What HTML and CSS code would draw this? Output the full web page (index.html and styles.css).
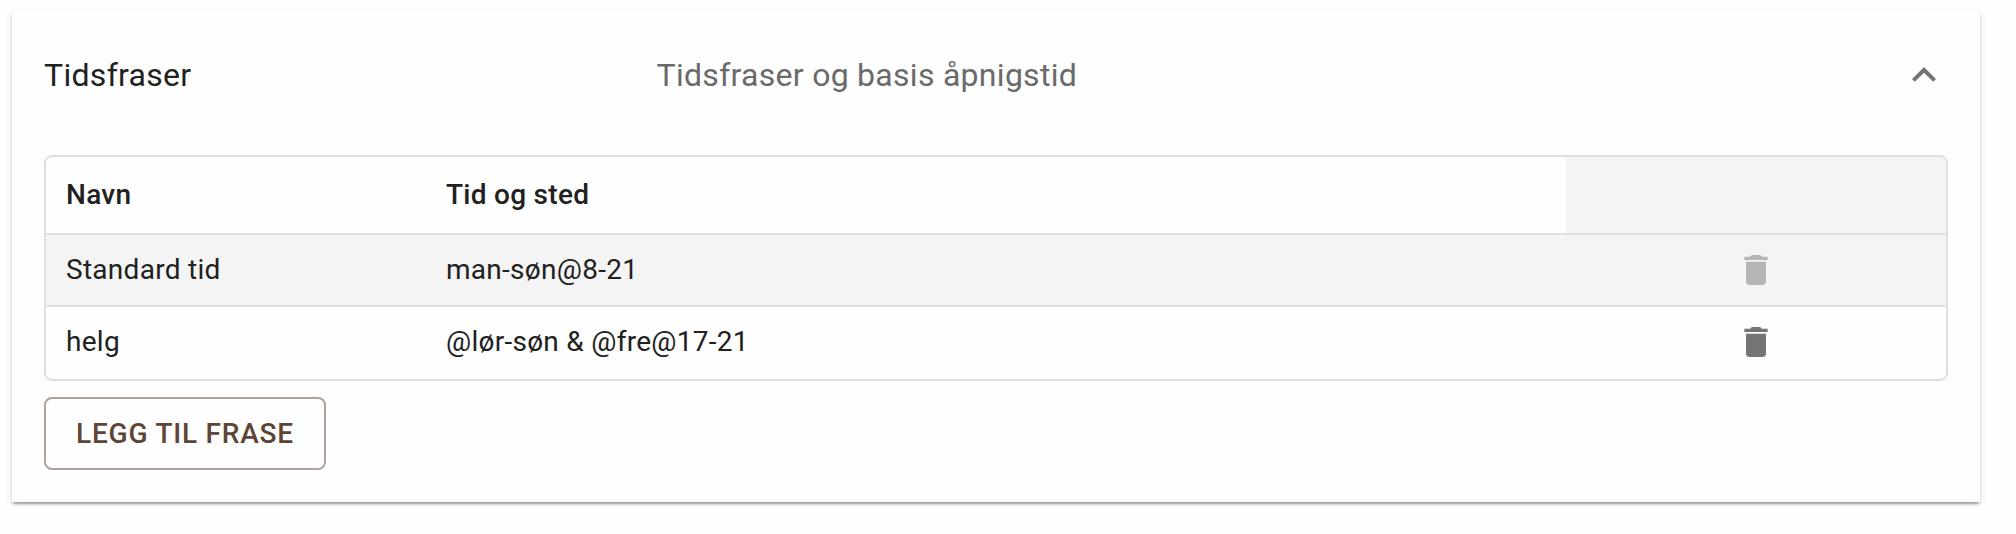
FILE: index.html
```html
<!DOCTYPE html>
<html lang="no">
<head>
<meta charset="utf-8">
<title>Tidsfraser</title>
<link rel="stylesheet" href="styles.css">
</head>
<body>
<section class="panel">
  <header class="panel-header">
    <h2 class="panel-title">Tidsfraser</h2>
    <p class="panel-description">Tidsfraser og basis åpnigstid</p>
    <svg class="chevron" viewBox="0 0 24 24"><path d="M12 8l-6 6 1.41 1.41L12 10.83l4.59 4.58L18 14z"/></svg>
  </header>
  <div class="phrases">
    <div class="row row-head">
      <div class="cell">Navn</div>
      <div class="cell">Tid og sted</div>
      <div class="cell cell-action"></div>
    </div>
    <div class="row row-default">
      <div class="cell">Standard tid</div>
      <div class="cell">man-søn@8-21</div>
      <div class="cell cell-action"><svg class="trash trash-disabled" viewBox="0 0 24 24"><path d="M6 19c0 1.1.9 2 2 2h8c1.1 0 2-.9 2-2V7H6v12zM19 4h-3.5l-1-1h-5l-1 1H5v2h14V4z"/></svg></div>
    </div>
    <div class="row">
      <div class="cell">helg</div>
      <div class="cell">@lør-søn &amp; @fre@17-21</div>
      <div class="cell cell-action"><svg class="trash" viewBox="0 0 24 24"><path d="M6 19c0 1.1.9 2 2 2h8c1.1 0 2-.9 2-2V7H6v12zM19 4h-3.5l-1-1h-5l-1 1H5v2h14V4z"/></svg></div>
    </div>
  </div>
  <button class="add-button" type="button">LEGG TIL FRASE</button>
</section>
</body>
</html>
```
FILE: styles.css
```css
* {
  box-sizing: border-box;
}

body {
  margin: 0;
  padding: 11px 36px 32px 12px;
  background: #fefefe;
  color: #212121;
  font-family: Roboto, "Liberation Sans", sans-serif;
}

.panel {
  height: 491px;
  padding: 0 32px;
  background: #fefefe;
  box-shadow: 0 4px 2px -2px rgba(0, 0, 0, 0.2), 0 2px 2px 0 rgba(0, 0, 0, 0.14), 0 2px 6px 0 rgba(0, 0, 0, 0.12);
}

.panel-header {
  display: flex;
  align-items: center;
  height: 128px;
  margin-bottom: 16px;
}

.panel-title,
.panel-description {
  margin: 0;
  font-size: 32px;
  font-weight: 400;
  line-height: 48px;
  letter-spacing: 0.3px;
}

.panel-title {
  flex: 0 0 612.6px;
}

.panel-description {
  flex: 1;
  color: #6a6a6a;
  letter-spacing: 0.28px;
}

.chevron {
  width: 48px;
  height: 48px;
  fill: #757575;
}

.phrases {
  border: 2px solid #e0e0e0;
  border-radius: 8px;
  overflow: hidden;
}

.row {
  display: grid;
  grid-template-columns: 20% 60% 20%;
  height: 72px;
  border-bottom: 2px solid transparent;
  font-size: 28px;
  line-height: 40px;
  letter-spacing: 0.28px;
}

.row-head {
  height: 78px;
  font-weight: 500;
}

.row-head,
.row-default {
  border-bottom-color: #e0e0e0;
}

.row-default,
.row-head .cell-action {
  background: #f4f4f4;
}

.cell {
  display: flex;
  align-items: center;
  padding: 0 20px;
}

.cell-action {
  justify-content: center;
}

.trash {
  width: 40px;
  height: 40px;
  fill: #757575;
}

.trash-disabled {
  fill: #b5b5b5;
}

.add-button {
  display: block;
  width: 282px;
  height: 73px;
  margin-top: 16px;
  padding: 0;
  border: 2px solid #aea29d;
  border-radius: 8px;
  background: transparent;
  color: #5d4437;
  font: 500 28px/49px Roboto, "Liberation Sans", sans-serif;
  letter-spacing: 0.78px;
}
```
